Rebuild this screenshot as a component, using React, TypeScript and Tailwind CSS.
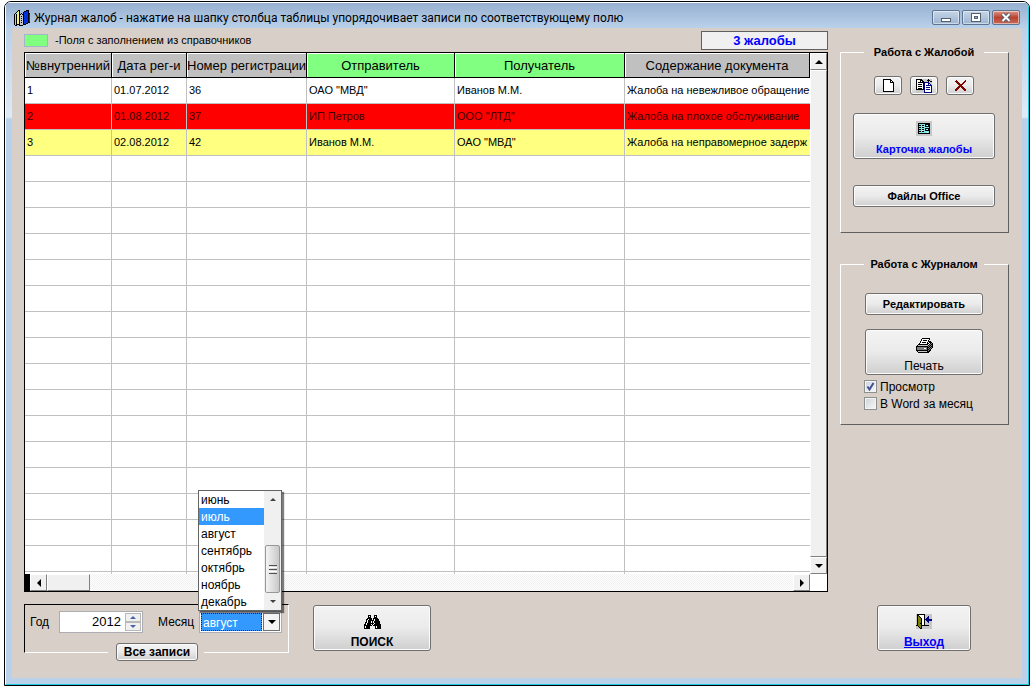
import React from 'react';
import clsx from 'clsx';

// ----------------------------------------------------------------------

const palette: Record<string, string> = {
  k: '#000000',
  w: '#ffffff',
  g: '#808080',
  s: '#c8c8c8',
  n: '#000080',
  b: '#0033dd',
  c: '#7fe8e8',
  y: '#f4f080',
  o: '#808000',
  r: '#800000',
};

const icons = {
  books: [
    '....kk......kkk.',
    '...kyk....kkbbk.',
    '..kyyk...kbbbbk.',
    '.kcyyk.k.kbbbbkk',
    'kckyykkskkbbbbkb',
    'kckyykssskbbbbkb',
    'kckyykskskbbbbkb',
    'kckyykssskbbbbkb',
    'kckyykskskbbbbkb',
    'kckyykssskbbbbkb',
    'kckyykskskbbbbkb',
    'kckyykssskbbbbkb',
    'kckyykskskbbbbkk',
    'kckyykssskbbkk..',
    'kckkkkssskkk....',
    '.kk..kkkk.......',
  ],
  page: [
    'kkkkkkkk...',
    'kwwwwwwkk..',
    'kwwwwwwkwk.',
    'kwwwwwwkkkk',
    'kwwwwwwwwwk',
    'kwwwwwwwwwk',
    'kwwwwwwwwwk',
    'kwwwwwwwwwk',
    'kwwwwwwwwwk',
    'kwwwwwwwwwk',
    'kwwwwwwwwwk',
    'kwwwwwwwwwk',
    'kkkkkkkkkkk',
  ],
  copy: [
    'kkkkkkssssssksss',
    'kwwwkkksssskkkss',
    'kwwwkwkksssskskk',
    'kwkkkkkknnnnnsss',
    'kwwwwwwknwwwnnss',
    'kwkkkkwknwwwnwns',
    'kwwwwwwknwnnnnnn',
    'kwkkkkwknwwwwwwn',
    'kwwwwwwknwnnnnwn',
    'kwkkkkwknwwwwwwn',
    'kkkkkkkknwnnnnwn',
    'ssssssssnwwwwwwn',
    'ssssssssnwwwwwwn',
    'ssssssssnnnnnnnn',
  ],
  remove: [
    '.r........r',
    'rrr......rr',
    '.rrr....rr.',
    '..rrr..rr..',
    '...rrrrr...',
    '....rrr....',
    '...rrrrr...',
    '..rrr.rrr..',
    '.rrr...rrr.',
    'rrr.....rrr',
    'rr.......rr',
  ],
  card: [
    'ssssssssssssssss',
    'ssssssssssssssss',
    'sskkkkkkkkkkkkss',
    'sskcccccckkkkkss',
    'sskkkckkckcwkkss',
    'sskccccwckkkkkss',
    'sskkkckkccccckss',
    'sskcccccckkkkkss',
    'sskkkckkckcwkkss',
    'sskcccwcckkkkkss',
    'sskkkckkccccckss',
    'sskccccccccwckss',
    'sskkkkkkkkkkkkss',
    'ssssssssssssssss',
    'ssssssssssssssss',
  ],
  printer: [
    '......kkkkkkkk...',
    '.....kwwwwwwwk...',
    '.....kwkkkkwk....',
    '....kwwwwwwwkkk..',
    '....kwkkkkwkwkkk.',
    '...kwwwwwwwkkwkgk',
    '..kkkkkkkkkkwkgkk',
    '.ksssssssssskgkgk',
    'kkkkkkkkkkkkgkgkk',
    'kggggggggggkkgkgk',
    'kgggggggwwgkgkgk.',
    'kggggggggggkkgk..',
    'kkkkkkkkkkkkgkk..',
    '.kssssssssskkk...',
    '..kkkkkkkkkkk....',
  ],
  search: [
    '....kkk...kkk....',
    '....kwk...kwk....',
    '....kkk...kkk....',
    '...kkkkk.kkkkk...',
    '..kkwkkk.kwkkkk..',
    '..kwkkkkkkwkkkk..',
    '..kwkkkwkwkkkkkk.',
    '.kkwkkkwkwkkkkkk.',
    '.kwkkkkkkkwkkkkk.',
    'kkwkkkkwkwkkkkkkk',
    'kkkkkkkk.kkkkkkkk',
    'kwkkkk.....kwkkkk',
    'kwkkkk.....kwkkkk',
    'kkkkkk.....kkkkkk',
  ],
  exit: [
    'skkkkkkkksssssss',
    'skkwwwwwksssssss',
    'skokwwwwksssnsss',
    'skookwwwkssnnsss',
    'skoookwwksnnnsss',
    'skoookwwknnnnnnn',
    'skoookwwksnnnnnn',
    'skoookwwkssnnsss',
    'skoookwwksssnsss',
    'skookkwwksssssss',
    'skoookwwksssssss',
    'kkoookkkkkkkksss',
    'sskookssssssssss',
    'ssskokssssssssss',
    'sssskkssssssssss',
  ],
};

const PixelIcon: React.FC<{ name: keyof typeof icons }> = ({ name }) => {
  const rows = icons[name];
  return (
    <svg width={rows[0].length} height={rows.length} shapeRendering="crispEdges" className="shrink-0" aria-hidden="true">
      {rows.map((row, y) =>
        row.split('').map((ch, x) => (ch === '.' ? null : <rect key={`${x}-${y}`} x={x} y={y} width={1} height={1} fill={palette[ch]} />))
      )}
    </svg>
  );
};

// ----------------------------------------------------------------------

const arrows = {
  up: 'M0 4 L4 0 L8 4 Z',
  down: 'M0 0 L8 0 L4 4 Z',
  left: 'M4 0 L4 8 L0 4 Z',
  right: 'M0 0 L4 4 L0 8 Z',
};

const Arrow: React.FC<{ to: keyof typeof arrows; small?: boolean; className?: string }> = ({ to, small, className }) => {
  const tall = to === 'left' || to === 'right';
  const k = small ? 0.75 : 1;
  return (
    <svg viewBox={tall ? '0 0 4 8' : '0 0 8 4'} width={(tall ? 4 : 8) * k} height={(tall ? 8 : 4) * k} className={className} aria-hidden="true">
      <path d={arrows[to]} fill="currentColor" />
    </svg>
  );
};

const Button: React.FC<React.ComponentProps<'button'>> = ({ className, ...props }) => (
  <button
    type="button"
    className={clsx(
      'flex flex-col items-center rounded-[3px] border border-[#707070] bg-linear-to-b from-[#f3f3f3] from-0% via-[#ebebeb] via-49% to-[#cfcfcf] to-100% shadow-[inset_0_0_0_1px_#fbfbfb]',
      className
    )}
    {...props}
  />
);

const scrollButton = 'flex shrink-0 items-center justify-center border border-t-white border-r-[#808080] border-b-[#808080] border-l-white bg-[#f0f0f0]';

const Group: React.FC<{ title: string; className?: string; children: React.ReactNode }> = ({ title, className, children }) => (
  <fieldset className={clsx('flex flex-col items-center border border-t-white border-r-[#606060] border-b-[#606060] border-l-white pr-px', className)}>
    <legend className="mx-auto w-[120px] text-center text-[11px] leading-4 font-bold whitespace-nowrap">{title}</legend>
    {children}
  </fieldset>
);

const Check: React.FC<{ label: string; checked?: boolean }> = ({ label, checked }) => (
  <label className="flex h-[17px] items-center gap-[3px] text-[12px] whitespace-nowrap">
    <span className="relative flex">
      <input
        type="checkbox"
        defaultChecked={checked}
        className="peer size-[13px] appearance-none border border-[#8e8f8f] bg-linear-to-br from-[#cfd3d8] to-[#f8f8f8] shadow-[inset_0_0_0_1px_#f4f4f4]"
      />
      <svg viewBox="0 0 13 13" className="pointer-events-none absolute inset-0 hidden size-[13px] peer-checked:block" aria-hidden="true">
        <path d="M3.5 6.5 L5.5 9.5 L9.5 3" fill="none" stroke="#3a4f9c" strokeWidth="2" />
      </svg>
    </span>
    {label}
  </label>
);

// ----------------------------------------------------------------------

const columns = [
  { title: '№внутренний', width: 'w-[87px]' },
  { title: 'Дата рег-и', width: 'w-[75px]' },
  { title: 'Номер регистрации', width: 'w-[120px]' },
  { title: 'Отправитель', width: 'w-[148px]', lookup: true },
  { title: 'Получатель', width: 'w-[170px]', lookup: true },
  { title: 'Содержание документа', width: '' },
];

const records = [
  { tone: 'bg-white', cells: ['1', '01.07.2012', '36', 'ОАО "МВД"', 'Иванов М.М.', 'Жалоба на невежливое обращение'] },
  { tone: 'bg-[#ff0000] text-[#400000]', cells: ['2', '01.08.2012', '37', 'ИП Петров', 'ООО "ЛТД"', 'Жалоба на плохое обслуживание'] },
  { tone: 'bg-[#ffff80]', cells: ['3', '02.08.2012', '42', 'Иванов М.М.', 'ОАО "МВД"', 'Жалоба на неправомерное задерж'] },
];

const emptyRows = Array.from({ length: 16 }, (_, i) => i);

const months = ['июнь', 'июль', 'август', 'сентябрь', 'октябрь', 'ноябрь', 'декабрь'];

const Journal: React.FC = () => (
  <div className="mt-[2px] border border-black bg-white">
    <div className="flex">
      <div className="min-w-0 flex-1">
        <table className="w-full table-fixed border-separate border-spacing-0">
          <thead>
            <tr>
              {columns.map((col) => (
                <th
                  key={col.title}
                  className={clsx(
                    'h-[25px] overflow-hidden border-r border-b border-black px-0 pt-[2px] pb-0 text-center text-[13px] leading-4 font-normal whitespace-nowrap shadow-[inset_1px_1px_0_#fff]',
                    col.width,
                    col.lookup ? 'bg-[#80ff80]' : 'bg-[#c0c0c0]'
                  )}
                >
                  {col.title}
                </th>
              ))}
            </tr>
          </thead>
          <tbody className="text-[11px] leading-4">
            {records.map((rec) => (
              <tr key={rec.cells[0]} className={rec.tone}>
                {rec.cells.map((cell, i) => (
                  <td key={columns[i].title} className="h-[26px] overflow-hidden border-r border-b border-[#c0c0c0] pt-0 pr-0 pb-[2px] pl-[2px] whitespace-nowrap last:border-r-0">
                    {cell}
                  </td>
                ))}
              </tr>
            ))}
            {emptyRows.map((n) => (
              <tr key={n}>
                {columns.map((col) => (
                  <td key={col.title} className="h-[26px] border-r border-b border-[#c0c0c0] p-0 last:border-r-0" />
                ))}
              </tr>
            ))}
            <tr>
              {columns.map((col) => (
                <td key={col.title} className="h-[2px] border-r border-[#c0c0c0] p-0 last:border-r-0" />
              ))}
            </tr>
          </tbody>
        </table>
      </div>

      <div className="flex w-[17px] flex-col">
        <button type="button" aria-label="Вверх" className={clsx(scrollButton, 'h-[17px]')}>
          <Arrow to="up" />
        </button>
        <div className={clsx(scrollButton, 'flex-1')} />
        <button type="button" aria-label="Вниз" className={clsx(scrollButton, 'h-[17px]')}>
          <Arrow to="down" />
        </button>
      </div>
    </div>

    <div className="flex h-[17px]">
      <div className="w-[5px] bg-black" />
      <button type="button" aria-label="Влево" className={clsx(scrollButton, 'w-[17px]')}>
        <Arrow to="left" />
      </button>
      <div className={clsx(scrollButton, 'w-[43px]')} />
      <div className="flex-1 bg-[repeating-conic-gradient(#fff_0_25%,#f0f0f0_0_50%)] bg-[length:2px_2px]" />
      <button type="button" aria-label="Вправо" className={clsx(scrollButton, 'w-[17px]')}>
        <Arrow to="right" />
      </button>
      <div className="w-[17px]" />
    </div>
  </div>
);

const MonthList: React.FC = () => (
  <div className="absolute bottom-[21px] -left-[2px] z-10 flex w-[84px] border border-[#646464] bg-white shadow-[2px_2px_1px_rgba(0,0,0,0.5)]">
    <ul role="listbox" aria-label="Месяц" className="flex-1">
      {months.map((m) => (
        <li key={m} role="option" aria-selected={m === 'июль'} className="h-[17px] pl-[2px] text-[12px] leading-[18px] aria-selected:bg-[#3399ff] aria-selected:text-white">
          {m}
        </li>
      ))}
    </ul>
    <div className="flex w-[17px] flex-col items-center bg-[#f0f0f0] text-[#404040]">
      <div className="flex h-[17px] items-center">
        <Arrow to="up" small />
      </div>
      <div className="flex-1" />
      <div className="flex h-[48px] w-[15px] flex-col items-center justify-center gap-px rounded-[2px] border border-[#979797] bg-linear-to-r from-[#f4f4f4] to-[#c8c8c8]">
        <div className="h-px w-2 bg-[#505050]" />
        <div className="h-px w-2 bg-white" />
        <div className="h-px w-2 bg-[#505050]" />
        <div className="h-px w-2 bg-white" />
        <div className="h-px w-2 bg-[#505050]" />
      </div>
      <div className="flex h-[17px] items-center">
        <Arrow to="down" small />
      </div>
    </div>
  </div>
);

const Filter: React.FC = () => (
  <div className="w-[265px]">
    <div className="flex h-[39px] border-t border-r border-l border-t-black border-r-white border-l-black pt-[6px] pl-[5px] text-[12px]">
      <label htmlFor="year" className="w-[29px] leading-[22px]">
        Год
      </label>
      <div className="flex h-[22px] w-[84px] border border-[#abadb3] bg-white p-px">
        <input id="year" type="text" defaultValue="2012" className="min-w-0 flex-1 pr-1 text-right text-[13px] outline-none" />
        <div className="flex w-4 flex-col text-[#4a60a8]">
          <button type="button" aria-label="Год вперёд" className="flex flex-1 items-center justify-center border border-[#b8b8b8] bg-[#f0f0f0]">
            <Arrow to="up" small />
          </button>
          <button type="button" aria-label="Год назад" className="flex flex-1 items-center justify-center border border-[#b8b8b8] bg-[#f0f0f0]">
            <Arrow to="down" small />
          </button>
        </div>
      </div>
      <label htmlFor="month" className="ml-[15px] w-[41px] leading-[22px]">
        Месяц
      </label>
      <div className="relative flex h-[22px] w-[83px] border border-[#abadb3] bg-white p-px">
        <select
          id="month"
          defaultValue="август"
          className="min-w-0 flex-1 appearance-none border border-dotted border-[#402000] bg-[#3399ff] pl-px text-[12px] text-white outline-none"
        >
          {months.map((m) => (
            <option key={m}>{m}</option>
          ))}
        </select>
        <div className="pointer-events-none ml-px flex w-[17px] items-center justify-center border border-[#707070] bg-[#f4f4f4]">
          <Arrow to="down" />
        </div>
        <MonthList />
      </div>
    </div>
    <div className="flex">
      <div className="h-[10px] w-[84px] border-b border-l border-b-white border-l-black" />
      <Button className="mr-[6px] ml-2 h-[18px] w-[82px] text-[12px] leading-4 font-bold whitespace-nowrap">Все записи</Button>
      <div className="h-[10px] flex-1 border-r border-b border-white" />
    </div>
  </div>
);

const captionButton = 'flex h-[15px] w-7 items-center justify-center rounded-[2px] border border-[#5c7490] shadow-[inset_0_0_0_1px_rgba(255,255,255,0.5)]';

const TitleBar: React.FC = () => (
  <header className="flex h-[25px] items-center px-[2px] pt-1">
    <PixelIcon name="books" />
    <h1 className="ml-1 flex-1 truncate font-[Roboto,'Noto_Sans',sans-serif] text-[12px] leading-4">
      Журнал жалоб - нажатие на шапку столбца таблицы упорядочивает записи по соответствующему полю
    </h1>
    <div className="flex gap-[2px]">
      <button type="button" aria-label="Свернуть" className={clsx(captionButton, 'bg-linear-to-b from-[#c5d5e8] to-[#9db5d0]')}>
        <svg width="12" height="11" aria-hidden="true">
          <rect x="1.5" y="6.5" width="9" height="3" fill="#fff" stroke="#53606f" />
        </svg>
      </button>
      <button type="button" aria-label="Развернуть" className={clsx(captionButton, 'bg-linear-to-b from-[#c5d5e8] to-[#9db5d0]')}>
        <svg width="12" height="11" aria-hidden="true">
          <rect x="1.5" y="1.5" width="9" height="8" fill="#fff" stroke="#53606f" />
          <rect x="4.5" y="4.5" width="3" height="2" fill="#9db5d0" stroke="#53606f" />
        </svg>
      </button>
      <button type="button" aria-label="Закрыть" className={clsx(captionButton, 'border-[#5a1a1a] bg-linear-to-b from-[#dc9488] via-[#b8422e] via-50% to-[#c86a58]')}>
        <svg width="12" height="11" aria-hidden="true">
          <path d="M2.5 2 L9.5 9 M9.5 2 L2.5 9" stroke="#53606f" strokeWidth="4" />
          <path d="M2.5 2 L9.5 9 M9.5 2 L2.5 9" stroke="#fff" strokeWidth="2" />
        </svg>
      </button>
    </div>
  </header>
);

const App: React.FC = () => {
  return (
    <div className="flex min-h-screen bg-white py-px pr-px pl-1 font-['Liberation_Sans',Arial,sans-serif] text-black">
      <div className="flex flex-1 overflow-hidden rounded-t-[7px] border border-black">
        <div className="flex min-w-0 flex-1 flex-col border border-t-white border-r-[#20c8e0] border-b-[#20c8e0] border-l-white bg-[linear-gradient(#97b0d0_0,#b9d1ea_25px,#dfebf7_114px,#b9d1ea_116px)] px-[6px] pb-[6px]">
          <TitleBar />
          <main className="flex flex-1 gap-3 bg-[#d8cfc8] pt-[3px] pr-[13px] pl-3">
            <div className="min-w-0 flex-1">
              <div className="flex h-[19px] items-center">
                <div className="h-[13px] w-6 border border-[#a3b5c8] bg-[#80ff80]" />
                <p className="ml-[7px] flex-1 pb-px text-[11px] leading-4">-Поля с заполнением из справочников</p>
                <output className="h-[19px] w-[127px] border border-[#606060] bg-[#f0f0f0] text-center text-[13px] leading-[17px] font-bold text-[#0000ff]">3 жалобы</output>
              </div>

              <Journal />

              <div className="mt-3 flex items-start gap-6">
                <Filter />
                <Button className="mt-px h-[46px] w-[118px] justify-end gap-[5px] text-[12px] leading-4 font-bold">
                  <PixelIcon name="search" />
                  ПОИСК
                </Button>
              </div>
            </div>

            <aside className="flex w-[169px] shrink-0 flex-col items-center pt-[13px]">
              <Group title="Работа с Жалобой" className="w-full pt-4 pb-[25px]">
                <div className="flex gap-2">
                  <Button aria-label="Новая" className="h-[19px] w-7 justify-center">
                    <PixelIcon name="page" />
                  </Button>
                  <Button aria-label="Копировать" className="h-[19px] w-7 justify-center">
                    <PixelIcon name="copy" />
                  </Button>
                  <Button aria-label="Удалить" className="h-[19px] w-7 justify-center">
                    <PixelIcon name="remove" />
                  </Button>
                </div>
                <Button className="mt-[18px] h-[46px] w-[142px] justify-end gap-[5px] pb-px text-[11px] leading-4 font-bold text-[#0000ff]">
                  <PixelIcon name="card" />
                  Карточка жалобы
                </Button>
                <Button className="mt-[26px] h-[22px] w-[142px] justify-center text-[11px] leading-4 font-bold">Файлы Office</Button>
              </Group>

              <Group title="Работа с Журналом" className="mt-[23px] w-full pt-[21px] pb-3">
                <Button className="h-[22px] w-[118px] justify-center text-[11px] leading-4 font-bold">Редактировать</Button>
                <Button className="mt-[14px] h-[46px] w-[118px] justify-end gap-[5px] text-[12px] leading-4">
                  <PixelIcon name="printer" />
                  Печать
                </Button>
                <div className="mt-[3px] w-[120px]">
                  <Check label="Просмотр" checked />
                  <Check label="В Word за месяц" />
                </div>
              </Group>

              <Button className="mt-auto mr-px mb-[27px] h-[46px] w-[94px] justify-end gap-[5px] text-[12px] leading-4 font-bold text-[#0000ff] underline">
                <PixelIcon name="exit" />
                Выход
              </Button>
            </aside>
          </main>
        </div>
      </div>
    </div>
  );
};

export default App;
